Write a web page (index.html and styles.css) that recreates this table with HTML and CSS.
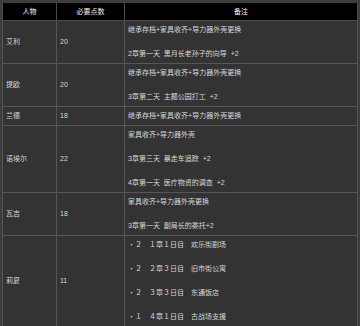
FILE: index.html
```html
<!DOCTYPE html>
<html>
<head>
<meta charset="utf-8">
<link rel="stylesheet" href="styles.css">
</head>
<body>
<div class="wrap">
<table class="tbl">
<thead>
<tr><th class="c1">人物</th><th class="c2">必要点数</th><th class="c3">备注</th></tr>
</thead>
<tbody>
<tr><td>艾利</td><td>20</td><td class="note">继承存档+家具收齐+导力器外壳更换<br><br>2章第一天&nbsp; 黑月长老孙子的向导&nbsp; +2</td></tr>
<tr><td>提欧</td><td>20</td><td class="note">继承存档+家具收齐+导力器外壳更换<br><br>3章第二天&nbsp; 主题公园打工&nbsp; +2</td></tr>
<tr><td>兰德</td><td>18</td><td class="note">继承存档+家具收齐+导力器外壳更换</td></tr>
<tr><td>诺埃尔</td><td>22</td><td class="note">家具收齐+导力器外壳<br><br>3章第三天&nbsp; 暴走车追踪&nbsp; +2<br><br>4章第一天&nbsp; 医疗物资的调查&nbsp; +2</td></tr>
<tr><td>瓦吉</td><td>18</td><td class="note">家具收齐+导力器外壳更换<br><br>3章第一天&nbsp; 副局长的委托+2</td></tr>
<tr><td>莉夏</td><td>11</td><td class="note">・２　１章１日目　欢乐街剧场<br><br>・２　２章３日目　旧市街公寓<br><br>・２　３章３日目　东通饭店<br><br>・１　４章１日目　古战场支援</td></tr>
</tbody>
</table>
</div>
</body>
</html>
```
FILE: styles.css
```css
html, body {
  margin: 0;
  padding: 0;
  background: #3d3d3d;
}
.wrap {
  padding: 3px 2px 0 2px;
}
.tbl {
  width: 356px;
  border-collapse: collapse;
  font-family: "Liberation Sans", "Noto Sans CJK SC", sans-serif;
  font-size: 7px;
  line-height: 12px;
  color: #d8d8d8;
  background: #333333;
}
.tbl th {
  background: #000;
  color: #f0f0f0;
  font-weight: normal;
  height: 17px;
  padding: 0;
  text-align: center;
  border: 1px solid #4a4a4a;
  border-top: none;
}
.c1 { width: 53px; }
.c2 { width: 67px; }
.tbl td {
  padding: 3px 3px;
  border: 1px solid #565656;
  vertical-align: middle;
  text-align: left;
}
.tbl td.note {
  padding-left: 3px;
}
```
